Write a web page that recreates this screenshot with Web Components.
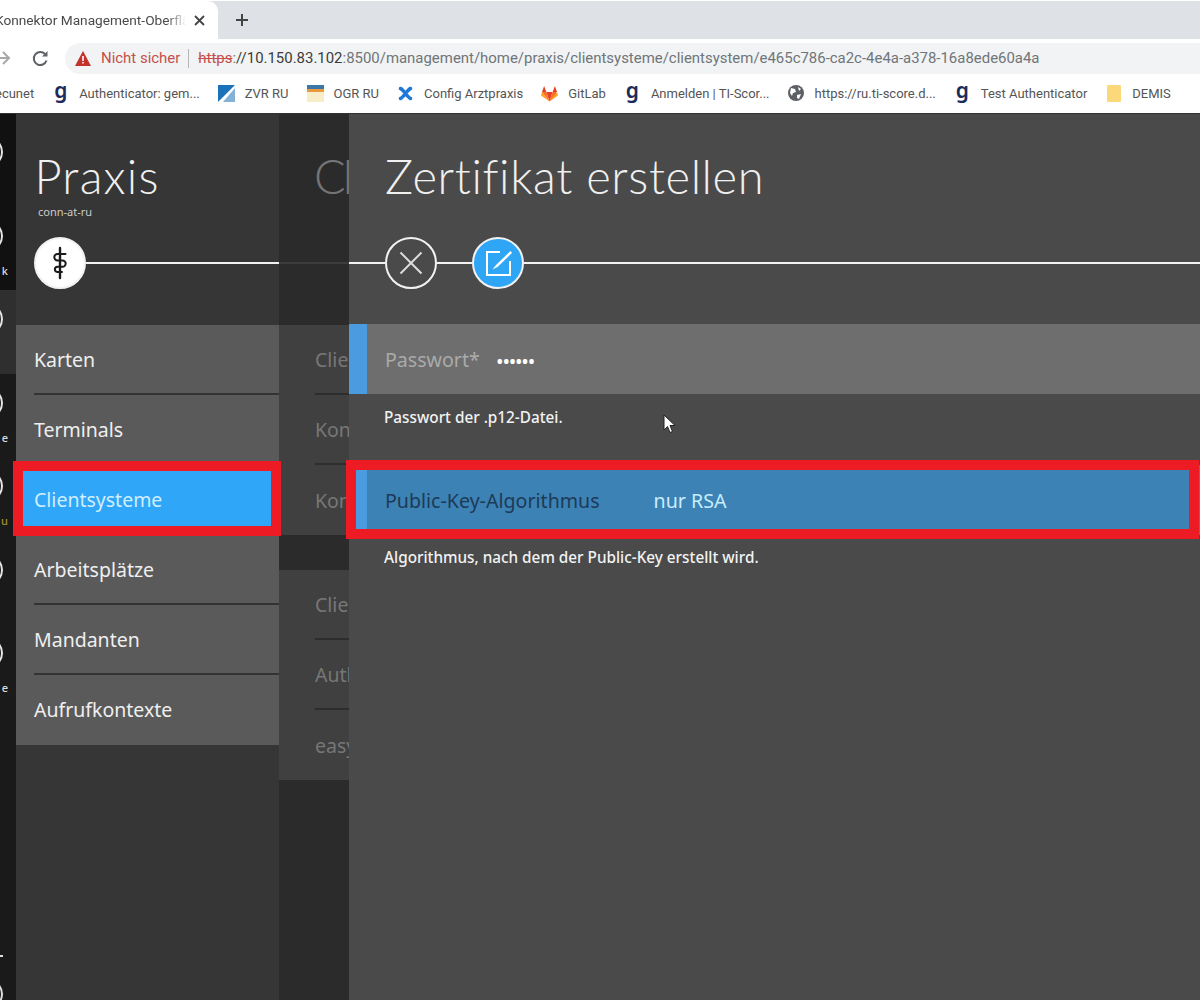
<!DOCTYPE html>
<html lang="de">
<head>
<meta charset="utf-8">
<title>Zertifikat erstellen</title>
<style>
    html, body { margin: 0; height: 100%; overflow: hidden; background: #4a4a4a; }
    body { font-family: "Noto Sans", "Liberation Sans", sans-serif; }
    .page { display: flex; flex-direction: column; height: 1000px; }
    .main { display: flex; flex: 1; min-height: 0; }
</style>
</head>
<body>
<div class="page">
    <browser-chrome></browser-chrome>
    <div class="main">
        <side-rail></side-rail>
        <praxis-panel></praxis-panel>
        <client-panel></client-panel>
        <cert-panel></cert-panel>
    </div>
</div>

<script>
const ICONS = {
    staff: `<svg width="24" height="34" viewBox="0 0 24 34" fill="none" stroke="#1a1a1a" stroke-linecap="round">
        <path d="M12 2v30" stroke-width="2.4"/>
        <path d="M17.500 8H9.500a3.200 3.200 0 0 0 0 6.400h5a3.200 3.200 0 0 1 0 6.400h-5a2.600 2.600 0 0 0 0 5.200H14" stroke-width="2"/>
    </svg>`,
    close: `<svg width="26" height="26" viewBox="0 0 26 26" fill="none" stroke="#dcdcdc" stroke-width="2">
        <path d="M2.500 2.500l21 21M23.500 2.500l-21 21"/>
    </svg>`,
    edit: `<svg width="30" height="30" viewBox="0 0 30 30" fill="none" stroke="#fff" stroke-width="2">
        <path d="M17 4H4v23h23V13"/>
        <path d="M27.500 3L13 17l-3.500 4.500L14.500 19 29 5z" fill="#fff" stroke="none"/>
    </svg>`
};

class BookmarkItem extends HTMLElement {
    constructor() {
        super();
        this.attachShadow({ mode: 'open' });
        this.shadowRoot.innerHTML = `
            <style>
                :host { display: flex; align-items: center; gap: 10px; white-space: nowrap; }
                .icon { display: flex; align-items: center; justify-content: center; width: 17px; height: 20px; }
                :host([bare]) .icon { display: none; }
            </style>
            <span class="icon"><slot name="icon"></slot></span>
            <slot></slot>
        `;
    }
}

class BrowserChrome extends HTMLElement {
    constructor() {
        super();
        this.attachShadow({ mode: 'open' });
        const g = '<span slot="icon" style="font:600 21px/20px \'Noto Sans\',sans-serif;color:#1d2a5c;margin-top:-6px">g</span>';
        this.shadowRoot.innerHTML = `
            <style>
                :host { display: block; background: #fff; height: 114px; overflow: hidden; font-family: "Roboto", "Liberation Sans", sans-serif; border-bottom: 1px solid #333; box-sizing: border-box; }
                .tabs { display: flex; align-items: center; height: 38px; background: #dee1e6; margin-top: 1px; }
                .tab { display: flex; align-items: center; background: #fff; width: 218px; height: 100%; border-radius: 0 10px 0 0; box-sizing: border-box; padding-right: 13px; color: #4a4a4a; font-size: 13.700px; overflow: hidden; white-space: nowrap; }
                .tab-title { flex: 1; overflow: hidden; margin-left: -5px; margin-right: 8px; -webkit-mask-image: linear-gradient(90deg, #000 90%, transparent); mask-image: linear-gradient(90deg, #000 90%, transparent); }
                .plus { margin-left: 17px; }
                .toolbar { display: flex; align-items: center; height: 38px; }
                .nav { display: flex; align-items: center; width: 65px; flex: none; }
                .nav svg:first-child { margin-left: -6px; }
                .nav svg:last-child { margin-left: 20px; }
                .omni { flex: 1; height: 31px; background: #f1f3f4; border-radius: 16px 0 0 16px; display: flex; align-items: center; padding-left: 10px; font-size: 14.950px; white-space: nowrap; overflow: hidden; }
                .warn { color: #c5504b; margin-left: 10px; }
                .sep { width: 1px; height: 19px; background: #b5b5b5; margin: 0 9px 0 8px; }
                .strike { color: #c5504b; text-decoration: line-through; }
                .dark { color: #3c3c3c; }
                .gray { color: #70757a; }
                .bookmarks { display: flex; align-items: center; gap: 18px; height: 36px; margin-top: -2px; font-size: 13px; color: #555; white-space: nowrap; }
                .bookmarks bookmark-item:first-child { margin-left: -5px; }
            </style>
            <div class="tabs">
                <div class="tab">
                    <span class="tab-title">Konnektor Management-Oberflä</span>
                    <svg width="11" height="11" viewBox="0 0 11 11" stroke="#444" stroke-width="1.800"><path d="M1 1l9 9M10 1l-9 9"/></svg>
                </div>
                <svg class="plus" width="14" height="14" viewBox="0 0 14 14" stroke="#444" stroke-width="2"><path d="M7 1v12M1 7h12"/></svg>
            </div>
            <div class="toolbar">
                <div class="nav">
                    <svg width="18" height="16" viewBox="0 0 18 16" fill="none" stroke="#a8a8a8" stroke-width="2"><path d="M1 8h14M9 2l6 6-6 6"/></svg>
                    <svg width="17" height="17" viewBox="0 0 17 17" fill="none" stroke="#5f6368" stroke-width="2"><path d="M14.500 10.500A6.500 6.500 0 1 1 13 4"/><path d="M15.500 1v5.500H10" fill="#5f6368" stroke="none"/></svg>
                </div>
                <div class="omni">
                    <svg width="16" height="15" viewBox="0 0 16 15"><path d="M8 0l8 15H0z" fill="#c5312b"/><path d="M7.200 5h1.600v5H7.200zM7.200 11h1.600v1.600H7.200z" fill="#fff"/></svg>
                    <span class="warn">Nicht sicher</span>
                    <span class="sep"></span>
                    <span class="strike">https</span><span class="gray">:</span><span class="dark">//10.150.83.102</span><span class="gray">:8500/management/home/praxis/clientsysteme/clientsystem/e465c786-ca2c-4e4a-a378-16a8ede60a4a</span>
                </div>
            </div>
            <div class="bookmarks">
                <bookmark-item bare>ecunet</bookmark-item>
                <bookmark-item>${g}Authenticator: gem...</bookmark-item>
                <bookmark-item><svg slot="icon" width="17" height="17" viewBox="0 0 17 17"><path fill="#1c72b8" d="M0 0h17L0 17z"/><path fill="#1c72b8" d="M17 3v14H5z" opacity=".55"/></svg>ZVR RU</bookmark-item>
                <bookmark-item><svg slot="icon" width="17" height="17" viewBox="0 0 17 17"><path fill="#f7edc8" d="M0 0h17v17H0z"/><path fill="#3a78a8" d="M0 0h17v4H0z"/><path fill="#e89a3c" d="M0 4h17v3H0z"/></svg>OGR RU</bookmark-item>
                <bookmark-item><svg slot="icon" width="15" height="15" viewBox="0 0 15 15" fill="none" stroke="#1f78d8" stroke-width="3.600" stroke-linecap="round"><path d="M2.500 2.500c3 1 7 9 10 10M12.500 2.500c-3 1-7 9-10 10"/></svg>Config Arztpraxis</bookmark-item>
                <bookmark-item><svg slot="icon" width="18" height="17" viewBox="0 0 18 17"><path fill="#e24329" d="M9 17L5.700 7h6.600z"/><path fill="#fc6d26" d="M9 17L1 7h4.700zM9 17l8-7-1-3h-3.700z"/><path fill="#fca326" d="M1 7L0 10.500 9 17zM17 7l1 3.500L9 17z"/><path fill="#e24329" d="M1 7l2.300-6.500L5.700 7zM17 7L14.700.500 12.300 7z"/></svg>GitLab</bookmark-item>
                <bookmark-item>${g}Anmelden | TI-Scor...</bookmark-item>
                <bookmark-item><svg slot="icon" width="16" height="16" viewBox="0 0 16 16"><circle cx="8" cy="8" r="8" fill="#5c5f63"/><path fill="#fff" d="M3 3l4 1 1 3-3 1-1 3-2-3zM10 2l3 2-2 2zM9 10l4-1-2 5-2-1z"/></svg>https://ru.ti-score.d...</bookmark-item>
                <bookmark-item>${g}Test Authenticator</bookmark-item>
                <bookmark-item><svg slot="icon" width="14" height="17" viewBox="0 0 14 17"><path fill="#fbd97a" d="M0 1a1 1 0 0 1 1-1h12a1 1 0 0 1 1 1v15a1 1 0 0 1-1 1H1a1 1 0 0 1-1-1z"/></svg>DEMIS</bookmark-item>
            </div>
        `;
    }
}

class RailItem extends HTMLElement {
    constructor() {
        super();
        this.attachShadow({ mode: 'open' });
        this.shadowRoot.innerHTML = `
            <style>
                :host { display: block; height: 83.500px; position: relative; overflow: hidden; padding-top: 13px; box-sizing: border-box; }
                :host([active]) { background: #2f2f2f; }
                .ring { display: block; width: 32px; height: 32px; margin-left: -29px; border: 2px solid #e6e6e6; border-radius: 50%; box-sizing: border-box; }
                .label { display: block; margin-top: 12px; text-align: right; padding-right: 8px; font-size: 11px; line-height: 14px; font-weight: 500; color: #ddd; height: 14px; }
                :host([tone="gold"]) .label { color: #a8902f; }
            </style>
            <span class="ring"></span>
            <span class="label"><slot></slot></span>
        `;
    }
}

class SideRail extends HTMLElement {
    constructor() {
        super();
        this.attachShadow({ mode: 'open' });
        this.shadowRoot.innerHTML = `
            <style>
                :host { display: flex; flex-direction: column; width: 16px; flex: none; background: #1a1a1a; overflow: hidden; }
                .top { background: #111; padding-top: 9px; }
                .end { margin-top: auto; height: 45px; }
                .dash { display: block; width: 3px; height: 2px; background: #ddd; }
                .arc { display: block; width: 30px; height: 30px; margin: 22px 0 0 -27px; border: 2px solid #ddd; border-radius: 50%; box-sizing: border-box; }
            </style>
            <div class="top">
                <rail-item></rail-item>
                <rail-item>k</rail-item>
            </div>
            <rail-item active></rail-item>
            <rail-item>e</rail-item>
            <rail-item tone="gold">u</rail-item>
            <rail-item></rail-item>
            <rail-item>e</rail-item>
            <div class="end"><span class="dash"></span><span class="arc"></span></div>
        `;
    }
}

class PanelHead extends HTMLElement {
    static get observedAttributes() { return ['heading', 'sub']; }

    constructor() {
        super();
        this.attachShadow({ mode: 'open' });
        this.shadowRoot.innerHTML = `
            <style>
                :host { display: block; height: var(--head-height, 211px); box-sizing: border-box; padding-top: 29px; color: #eee; }
                h1 { margin: 0 0 0 var(--head-indent, 36px); height: 54px; font: 300 47px/66px "Lato", "Noto Sans", sans-serif; letter-spacing: var(--head-spacing, .6px); white-space: nowrap; color: var(--head-color, #f0f0f0); }
                .sub { margin-left: var(--sub-indent, 38px); height: 38px; padding-top: 2px; font-size: 11px; line-height: 26px; color: #ccc; }
                .line { display: flex; align-items: center; height: 52px; }
            </style>
            <h1></h1>
            <div class="sub"></div>
            <div class="line"><slot></slot></div>
        `;
    }

    attributeChangedCallback() {
        this.shadowRoot.querySelector('h1').textContent = this.getAttribute('heading') || '';
        this.shadowRoot.querySelector('.sub').textContent = this.getAttribute('sub') || '';
    }
}

class LineSeg extends HTMLElement {
    constructor() {
        super();
        this.attachShadow({ mode: 'open' });
        this.shadowRoot.innerHTML = `<style>:host { display: block; height: 2px; background: var(--line-color, #f2f2f2); flex: 1; }</style>`;
    }
}

class RoundIcon extends HTMLElement {
    constructor() {
        super();
        this.attachShadow({ mode: 'open' });
        this.shadowRoot.innerHTML = `
            <style>
                :host { display: flex; align-items: center; justify-content: center; width: 52px; height: 52px; flex: none; border-radius: 50%; border: 2px solid #f2f2f2; box-sizing: border-box; }
                :host([kind="staff"]) { background: #fff; }
                :host([kind="edit"]) { background: #2fa6f5; }
            </style>
            <span id="glyph" style="display:flex"></span>
        `;
    }

    connectedCallback() {
        this.shadowRoot.querySelector('#glyph').innerHTML = ICONS[this.getAttribute('kind')];
    }
}

class RedMark extends HTMLElement {
    constructor() {
        super();
        this.attachShadow({ mode: 'open' });
        this.shadowRoot.innerHTML = `<style>:host { position: absolute; border: 10px solid #ed1c24; box-sizing: border-box; z-index: 3; pointer-events: none; }</style>`;
    }
}

class NavItem extends HTMLElement {
    constructor() {
        super();
        this.attachShadow({ mode: 'open' });
        this.shadowRoot.innerHTML = `
            <style>
                :host { display: flex; align-items: center; position: relative; height: 70px; box-sizing: border-box; padding: 0 0 2px 18px; font-size: 19.500px; color: #efefef; }
                :host::after { content: ""; position: absolute; left: 18px; right: 0; bottom: 0; height: 2px; background: #333; }
                :host([selected]) { background: #30a6f8; color: #cfeeff; }
                :host([selected])::after { display: none; }
                :host(:last-child)::after { display: none; }
            </style>
            <slot></slot>
        `;
    }

    connectedCallback() {
        if (this.hasAttribute('selected')) {
            const mark = document.createElement('red-mark');
            mark.style.cssText = 'top:-4px;bottom:-1px;left:-3px;right:-2px';
            this.shadowRoot.appendChild(mark);
        }
    }
}

class PraxisPanel extends HTMLElement {
    constructor() {
        super();
        this.attachShadow({ mode: 'open' });
        this.shadowRoot.innerHTML = `
            <style>
                :host { display: block; width: 263px; flex: none; background: #363636; position: relative; z-index: 2; --head-indent: 18.500px; --sub-indent: 22px; --head-spacing: 1.200px; }
                .nav { background: #5a5a5a; }
            </style>
            <panel-head heading="Praxis" sub="conn-at-ru">
                <round-icon kind="staff" style="margin-left:18px"></round-icon>
                <line-seg></line-seg>
            </panel-head>
            <div class="nav">
                <nav-item>Karten</nav-item>
                <nav-item>Terminals</nav-item>
                <nav-item selected>Clientsysteme</nav-item>
                <nav-item>Arbeitsplätze</nav-item>
                <nav-item>Mandanten</nav-item>
                <nav-item>Aufrufkontexte</nav-item>
            </div>
        `;
    }
}

class ClientRow extends HTMLElement {
    constructor() {
        super();
        this.attachShadow({ mode: 'open' });
        this.shadowRoot.innerHTML = `
            <style>
                :host { display: flex; align-items: center; height: 70px; box-sizing: border-box; margin-left: 36px; font-size: 19.500px; color: #777; border-bottom: 2px solid #2d2d2d; white-space: nowrap; }
                :host(:last-child) { border-bottom: 0; }
            </style>
            <slot></slot>
        `;
    }
}

class ClientPanel extends HTMLElement {
    constructor() {
        super();
        this.attachShadow({ mode: 'open' });
        this.shadowRoot.innerHTML = `
            <style>
                :host { display: block; width: 70px; flex: none; background: #2b2b2b; overflow: hidden; --head-color: #757575; --line-color: #3c3c3c; --head-indent: 35px; --head-spacing: -3px; }
                .card { width: 120px; background: #404040; }
                .card + .card { margin-top: 35px; }
            </style>
            <panel-head heading="Cl"><line-seg></line-seg></panel-head>
            <div class="card">
                <client-row>Clie</client-row>
                <client-row>Kon</client-row>
                <client-row>Kon</client-row>
            </div>
            <div class="card">
                <client-row>Clie</client-row>
                <client-row>Autl</client-row>
                <client-row>easy</client-row>
            </div>
        `;
    }
}

class FieldRow extends HTMLElement {
    constructor() {
        super();
        this.attachShadow({ mode: 'open' });
        this.shadowRoot.innerHTML = `
            <style>
                :host { display: block; position: relative; font-size: 19.600px; }
                .row { display: flex; align-items: center; height: 70px; background: #6e6e6e; border-left: 18px solid #4a9be0; box-sizing: border-box; padding-left: 18px; position: relative; }
                :host([focused]) .row { background: #3c82b5; }
                .label { color: #aaa; white-space: nowrap; }
                :host([focused]) .label { color: #1d3a57; }
                .value { color: #fff; margin-left: var(--value-gap, 17px); white-space: nowrap; }
                :host([focused]) .value { color: #c8edff; }
                .help { height: 70px; box-sizing: border-box; padding: var(--help-pad, 11px) 0 0 35px; font-size: 15.300px; font-weight: 500; line-height: 24px; color: #f2f2f2; }
            </style>
            <div class="row">
                <span class="label"><slot name="label"></slot></span>
                <span class="value"><slot name="value"></slot></span>
            </div>
            <div class="help"><slot></slot></div>
        `;
    }

    connectedCallback() {
        if (this.hasAttribute('focused')) {
            const mark = document.createElement('red-mark');
            mark.style.cssText = 'top:-5px;bottom:-4px;left:-21px;right:1px';
            this.shadowRoot.querySelector('.row').appendChild(mark);
        }
    }
}

class CertPanel extends HTMLElement {
    constructor() {
        super();
        this.attachShadow({ mode: 'open' });
        this.shadowRoot.innerHTML = `
            <style>
                :host { display: block; flex: 1; min-width: 0; background: #4a4a4a; position: relative; z-index: 1; --head-height: 210px; }
                field-row[focused] { margin-top: 1px; --help-pad: 10px; --value-gap: 54px; }
                .cursor { position: absolute; left: 314px; top: 300px; }
                .dots { font-size: 16px; letter-spacing: .3px; font-weight: 700; }
            </style>
            <panel-head heading="Zertifikat erstellen" sub=" ">
                <line-seg style="flex:none;width:36px"></line-seg>
                <round-icon kind="close"></round-icon>
                <line-seg style="flex:none;width:35px"></line-seg>
                <round-icon kind="edit"></round-icon>
                <line-seg></line-seg>
            </panel-head>
            <field-row>
                <span slot="label">Passwort*</span>
                <span slot="value" class="dots">••••••</span>
                Passwort der .p12-Datei.
            </field-row>
            <field-row focused>
                <span slot="label">Public-Key-Algorithmus</span>
                <span slot="value">nur RSA</span>
                Algorithmus, nach dem der Public-Key erstellt wird.
            </field-row>
            <svg class="cursor" width="15" height="21" viewBox="0 0 15 21"><path d="M1 1v15l3.500-3.500 2.500 6 2.500-1-2.500-6H12z" fill="#fff" stroke="#222" stroke-width="1"/></svg>
        `;
    }
}

customElements.define('bookmark-item', BookmarkItem);
customElements.define('browser-chrome', BrowserChrome);
customElements.define('rail-item', RailItem);
customElements.define('side-rail', SideRail);
customElements.define('panel-head', PanelHead);
customElements.define('line-seg', LineSeg);
customElements.define('round-icon', RoundIcon);
customElements.define('red-mark', RedMark);
customElements.define('nav-item', NavItem);
customElements.define('praxis-panel', PraxisPanel);
customElements.define('client-row', ClientRow);
customElements.define('client-panel', ClientPanel);
customElements.define('field-row', FieldRow);
customElements.define('cert-panel', CertPanel);
</script>
</body>
</html>
